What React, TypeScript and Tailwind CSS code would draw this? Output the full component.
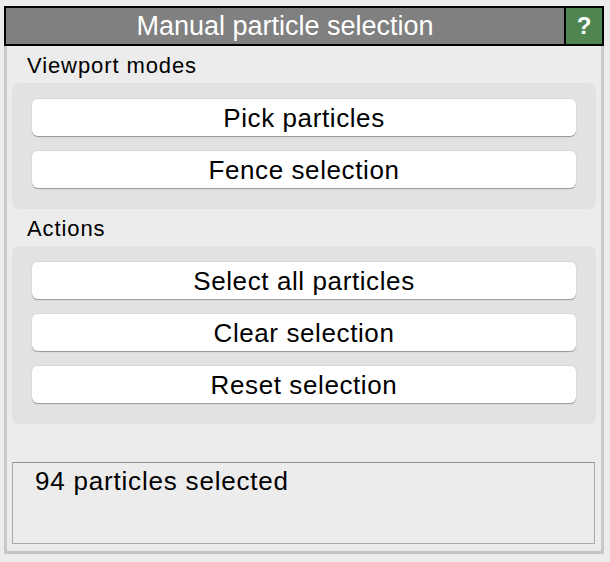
import React from "react";

const font = { fontFamily: '"Liberation Sans", Arial, sans-serif' };

function PanelButton({ label }: { label: string }) {
  return (
    <button className="h-[38px] w-full rounded-[6px] border-t border-[#d8d8d8] bg-white text-[26px] leading-[38px] tracking-[0.6px] text-black shadow-[0_1px_1px_rgba(0,0,0,0.35)]">
      {label}
    </button>
  );
}

function Group({ title, items }: { title: string; items: string[] }) {
  return (
    <div>
      <div className="h-[37px] pt-[8px] pl-[15px] text-[22px] leading-[24px] tracking-[0.9px] text-black">{title}</div>
      <div className="flex flex-col gap-[14px] rounded-[7px] bg-[#e2e2e2] px-[20px] pt-[15px] pb-[21px]">
        {items.map((it) => (
          <PanelButton key={it} label={it} />
        ))}
      </div>
    </div>
  );
}

export default function App() {
  return (
    <div className="h-[562px] w-[610px] bg-[#ececec] px-[4px] pt-[6px]" style={font}>
      {/* header */}
      <div className="flex h-[40px] w-[600px] border-2 border-black bg-[#808080]">
        <div className="flex flex-1 items-center justify-center text-[27px] text-white">Manual particle selection</div>
        <div className="flex w-[38px] items-center justify-center border-l-2 border-black bg-[#4e8550] text-[24px] font-bold text-white">
          ?
        </div>
      </div>

      {/* body */}
      <div className="h-[508px] w-[600px] border-x-[3px] border-b-[3px] border-x-[#c9c9c9] border-b-[#c4c4c4] px-[5px]">
        <Group title="Viewport modes" items={["Pick particles", "Fence selection"]} />
        <Group title="Actions" items={["Select all particles", "Clear selection", "Reset selection"]} />

        <div className="mt-[38px] h-[82px] w-[583px] border border-[#a9a9a9] border-t-[#8f8f8f] px-[22px] pt-[3px] text-[26px] leading-[30px] tracking-[0.8px] text-black">
          94 particles selected
        </div>
      </div>
    </div>
  );
}
